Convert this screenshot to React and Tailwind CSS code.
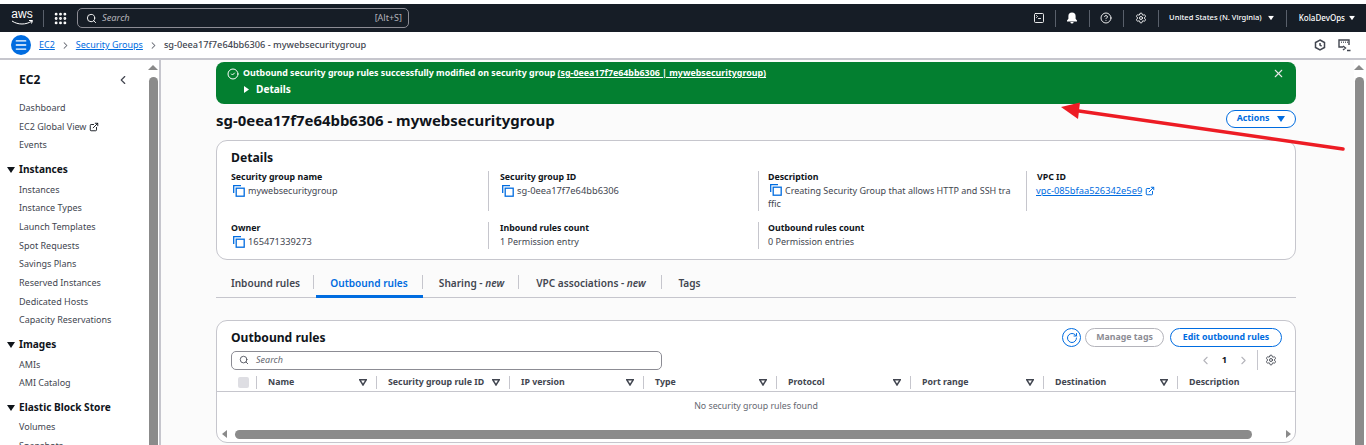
import { Search, Grip, SquareTerminal, CircleHelp, Settings, ChevronRight, ChevronLeft, X, CircleCheck, Menu, RotateCw, ExternalLink } from "lucide-react";

const NAV_SECTIONS = [
  { title: "Instances", items: ["Instances", "Instance Types", "Launch Templates", "Spot Requests", "Savings Plans", "Reserved Instances", "Dedicated Hosts", "Capacity Reservations"] },
  { title: "Images", items: ["AMIs", "AMI Catalog"] },
  { title: "Elastic Block Store", items: ["Volumes", "Snapshots"] },
];

const COLUMNS = [
  { label: "Name", w: "w-[120px]" },
  { label: "Security group rule ID", w: "w-[133px]" },
  { label: "IP version", w: "w-[134px]" },
  { label: "Type", w: "w-[133px]" },
  { label: "Protocol", w: "w-[134px]" },
  { label: "Port range", w: "w-[133px]" },
  { label: "Destination", w: "w-[134px]" },
];

const TABS = [
  { label: "Inbound rules", w: "w-[98px]" },
  { label: "Outbound rules", w: "w-[109px]", active: true },
  { label: "Sharing", tag: true, w: "w-[96px]" },
  { label: "VPC associations", tag: true, w: "w-[143px]" },
  { label: "Tags", w: "w-[54px]", last: true },
];

function CopyIcon() {
  return (
    <svg width="12" height="12" viewBox="0 0 12 12" fill="none" stroke="#006ce0" strokeWidth="1.3" className="shrink-0">
      <path d="M0.7 8V0.7H8" />
      <rect x="3.2" y="3.2" width="8" height="8" />
    </svg>
  );
}

function Caret({ className }) {
  return (
    <svg width="8" height="6" viewBox="0 0 8 6" className={className} fill="currentColor">
      <path d="M0 0h8L4 6z" />
    </svg>
  );
}

function FilterCaret() {
  return (
    <svg width="8" height="7" viewBox="0 0 8 7" fill="none" stroke="#424650" strokeWidth="1.5" className="shrink-0">
      <path d="M0.8 0.8h6.4L4 6z" />
    </svg>
  );
}

function Field({ label, children }) {
  return (
    <div>
      <div className="text-[8.8px] leading-[13px] font-bold text-[#0f141a]">{label}</div>
      <div className="text-[9px] leading-[13px] text-[#424650]">{children}</div>
    </div>
  );
}

function Scrollbar({ className = "" }) {
  return (
    <div className={`w-[10px] shrink-0 flex flex-col items-center ${className}`}>
      <div className="mt-[5px] w-0 h-0 border-x-[5px] border-x-transparent border-b-[5px] border-b-[#8a8a8a]" />
      <div className="mt-[7px] w-[9px] h-[400px] rounded-t-[5px] bg-[#8b8b8b]" />
    </div>
  );
}

export default function App() {
  return (
    <div className="relative w-[1366px] h-[445px] overflow-hidden flex flex-col bg-white font-['Noto_Sans','Open_Sans',sans-serif] text-[#0f141a]">
      <div className="h-[4px] shrink-0 bg-white" />

      {/* Top nav */}
      <header className="h-[28px] shrink-0 bg-[#161d26] flex items-center text-white">
        <div className="w-[32px] ml-[11px] h-full flex flex-col items-center">
          <span className="text-[12px] leading-[12px] mt-[4px] font-['Liberation_Sans',sans-serif] -ml-[10px]">aws</span>
          <svg width="23" height="6" viewBox="0 0 23 6" fill="none" className="-ml-[10px]">
            <path d="M1 1c6 4 14 4 20 0M18 0.5h3.5l-1 3" stroke="#fff" strokeWidth="1" />
          </svg>
        </div>
        <div className="w-px h-[17px] bg-[#59606b]" />
        <Grip size={15} strokeWidth={2.6} className="ml-[9px] shrink-0" />
        <div className="ml-[9px] w-[332px] h-[20px] border border-[#8c8c94] rounded-[5px] flex items-center pl-[8px] pr-[6px] text-[#b4b4bb]">
          <Search size={11} className="text-white" />
          <span className="ml-[5px] text-[9.3px] italic flex-1">Search</span>
          <span className="text-[9px]">[Alt+S]</span>
        </div>
        <div className="ml-auto flex items-center h-full">
          <SquareTerminal size={12} strokeWidth={1.8} className="shrink-0" />
          <div className="w-px h-[17px] bg-[#59606b] ml-[10px]" />
          <svg width="12" height="12" viewBox="0 0 12 12" fill="#fff" className="ml-[10px]">
            <path d="M6 0.5a3.6 3.6 0 0 0-3.6 3.6v2.6L1 8.4v1h10v-1L9.6 6.7V4.1A3.6 3.6 0 0 0 6 .5zM4.4 10a1.6 1.6 0 0 0 3.2 0z" />
          </svg>
          <div className="w-px h-[17px] bg-[#59606b] ml-[11px]" />
          <CircleHelp size={12} strokeWidth={1.8} className="ml-[10px]" />
          <div className="w-px h-[17px] bg-[#59606b] ml-[11px]" />
          <Settings size={12} strokeWidth={1.8} className="ml-[11px]" />
          <div className="w-px h-[17px] bg-[#59606b] ml-[11px]" />
          <span className="ml-[10px] text-[7.55px] font-medium">United States (N. Virginia)</span>
          <Caret className="ml-[5px] scale-75" />
          <div className="w-px h-[17px] bg-[#59606b] ml-[11px]" />
          <span className="ml-[12px] text-[8px] font-medium">KolaDevOps</span>
          <Caret className="ml-[3px] mr-[10px] scale-75" />
        </div>
      </header>

      {/* Breadcrumbs */}
      <div className="h-[28px] shrink-0 border-b-2 border-[#c6c6cd] flex items-center text-[9px]">
        <div className="ml-[11px] w-[20px] h-[20px] rounded-full bg-[#006ce0] flex items-center justify-center text-white">
          <Menu size={14} strokeWidth={2.4} />
        </div>
        <span className="ml-[8px] text-[#006ce0] underline">EC2</span>
        <ChevronRight size={11} strokeWidth={2.2} className="mx-[5px] text-[#656871]" />
        <span className="text-[#006ce0] underline">Security Groups</span>
        <ChevronRight size={11} strokeWidth={2.2} className="mx-[5px] text-[#656871]" />
        <span className="text-[#424650] text-[9.2px] font-medium">sg-0eea17f7e64bb6306 - mywebsecuritygroup</span>
        <div className="ml-auto mr-[15px] flex items-center gap-[12px] text-[#424650]">
          <svg width="12" height="12" viewBox="0 0 12 12" fill="none" stroke="currentColor" strokeWidth="1.5">
            <path d="M6 1l4.5 2.5v5L6 11 1.5 8.5v-5z" />
            <path d="M6 4v2.2l1.6 1" />
          </svg>
          <svg width="13" height="13" viewBox="0 0 13 13" fill="none" stroke="currentColor" strokeWidth="1.4">
            <path d="M5 8H1V1h10v5" />
            <path d="M3 3.2h.8M5 3.2h.8M7 3.2h.8M9 3.2h.8M9 11.5h3.5M5 7l2.5 2L5 11" />
          </svg>
        </div>
      </div>

      <div className="flex-1 min-h-0 flex">
        {/* Sidebar */}
        <aside className="w-[161px] shrink-0 border-r-2 border-[#c6c6cd] flex overflow-hidden">
          <nav className="w-[148px] shrink-0">
            <div className="h-[39px] pl-[19px] pr-[18px] flex items-center justify-between">
              <span className="text-[12px] font-bold">EC2</span>
              <ChevronLeft size={14} strokeWidth={2} className="text-[#424650]" />
            </div>
            <ul className="pl-[19px] text-[9px] text-[#424650]">
              <li className="h-[18.7px] leading-[18.7px]">Dashboard</li>
              <li className="h-[18.7px] leading-[18.7px] flex items-center gap-[3px]">EC2 Global View <ExternalLink size={10} strokeWidth={2.2} className="text-[#0f141a]" /></li>
              <li className="h-[18.7px] leading-[18.7px]">Events</li>
            </ul>
            {NAV_SECTIONS.map((s) => (
              <div key={s.title} className="mt-[4px]">
                <div className="h-[21.5px] pl-[7px] flex items-center text-[10.1px] font-bold">
                  <Caret className="mr-[4px]" />
                  {s.title}
                </div>
                <ul className="pl-[19px] text-[9px] text-[#424650]">
                  {s.items.map((i) => (
                    <li key={i} className="h-[18.7px] leading-[18.7px]">{i}</li>
                  ))}
                </ul>
              </div>
            ))}
          </nav>
          <Scrollbar className="bg-white" />
        </aside>

        {/* Main */}
        <main className="flex-1 min-w-0 bg-[#fbfbfb] pl-[55px] pr-[58px] pt-[2px] overflow-hidden">
          {/* Flash */}
          <div className="h-[42px] rounded-[8px] bg-[#037f30] text-white pl-[11px] pr-[11px] pt-[4px] flex">
            <CircleCheck size={12} className="mt-[2px] shrink-0" />
            <div className="ml-[4px] flex-1">
              <div className="text-[8.85px] leading-[15px] font-bold">
                Outbound security group rules successfully modified on security group <span className="underline">(sg-0eea17f7e64bb6306 | mywebsecuritygroup)</span>
              </div>
              <div className="mt-[1px] pl-[1px] flex items-center text-[10.1px] leading-[15px] font-bold">
                <svg width="5" height="7" viewBox="0 0 5 7" fill="#fff" className="mr-[7px]"><path d="M0 0l5 3.5L0 7z" /></svg>
                Details
              </div>
            </div>
            <X size={13} className="text-[#e8e8e8] shrink-0 mt-[1px]" />
          </div>

          {/* Title */}
          <div className="h-[36px] flex items-end justify-between">
            <h1 className="text-[14.95px] leading-[24px] font-bold mb-[8px]">sg-0eea17f7e64bb6306 - mywebsecuritygroup</h1>
            <button className="h-[18px] w-[70px] mb-[12px] rounded-full border border-[#006ce0] bg-white text-[#006ce0] text-[8.8px] font-bold flex items-center justify-center gap-[8px]">
              Actions <Caret />
            </button>
          </div>

          {/* Details card */}
          <section className="h-[120px] rounded-[11px] border border-[#c6c6cd] bg-white pl-[14px] pt-[8px]">
            <h2 className="text-[12.2px] leading-[18px] font-bold">Details</h2>
            <div className="mt-[4px] grid grid-cols-[258px_269px_268px_1fr]">
              <Field label="Security group name">
                <span className="flex items-center gap-[3px] pl-[2px]"><CopyIcon />mywebsecuritygroup</span>
              </Field>
              <div className="pl-[11px] border-l border-[#c6c6cd] h-[40px] -ml-px">
                <Field label="Security group ID">
                  <span className="flex items-center gap-[3px] pl-[2px] text-[9.3px]"><CopyIcon />sg-0eea17f7e64bb6306</span>
                </Field>
              </div>
              <div className="pl-[9px] border-l border-[#c6c6cd] h-[40px]">
                <Field label="Description">
                  <span className="block leading-[13px] w-[243px] break-all"><span className="inline-block align-[-2px] mr-[3px] ml-[2px]"><CopyIcon /></span>Creating Security Group that allows HTTP and SSH traffic</span>
                </Field>
              </div>
              <div className="pl-[10px] border-l border-[#c6c6cd] h-[40px]">
                <Field label="VPC ID">
                  <span className="flex items-center gap-[3px] -ml-[1px] text-[#006ce0] underline text-[9.3px]">vpc-085bfaa526342e5e9 <ExternalLink size={10} strokeWidth={2.4} /></span>
                </Field>
              </div>
            </div>
            <div className="mt-[11px] grid grid-cols-[258px_269px_1fr]">
              <Field label="Owner">
                <span className="flex items-center gap-[3px] pl-[2px] text-[9.3px]"><CopyIcon />165471339273</span>
              </Field>
              <div className="pl-[11px] border-l border-[#c6c6cd] h-[27px] -ml-px">
                <Field label="Inbound rules count">1 Permission entry</Field>
              </div>
              <div className="pl-[9px] border-l border-[#c6c6cd] h-[27px]">
                <Field label="Outbound rules count">0 Permission entries</Field>
              </div>
            </div>
          </section>

          {/* Tabs */}
          <div className="mt-[10px] h-[28px] border-b border-[#c6c6cd] flex items-center text-[10.1px] font-semibold text-[#424650]">
            {TABS.map((t) => (
              <div key={t.label} className={`relative h-full shrink-0 pl-[1px] flex items-center justify-center ${t.w} ${t.active ? "text-[#006ce0]" : ""}`}>
                <span>{t.label}{t.tag && <> - <i>new</i></>}</span>
                {!t.last && <span className="absolute right-0 top-[5px] h-[14px] w-px bg-[#c6c6cd]" />}
                {t.active && <span className="absolute left-[2px] right-0 bottom-[-1px] h-[3px] bg-[#006ce0]" />}
              </div>
            ))}
          </div>

          {/* Rules card */}
          <section className="mt-[22px] h-[123px] rounded-[11px] border border-[#c6c6cd] bg-white overflow-hidden">
            <div className="flex pl-[14px] pr-[13px] pt-[7px] items-start">
              <h2 className="text-[12.1px] leading-[18px] font-bold mt-[1px]">Outbound rules</h2>
              <div className="ml-auto flex items-center">
                <div className="w-[19px] h-[19px] rounded-full border border-[#006ce0] flex items-center justify-center text-[#006ce0]">
                  <RotateCw size={12} />
                </div>
                <div className="ml-[4px] w-[79px] h-[19px] rounded-full border border-[#b4b4bb] text-[#8c8c94] text-[8.8px] font-bold flex items-center justify-center">Manage tags</div>
                <div className="ml-[6px] w-[112px] h-[19px] rounded-full border border-[#006ce0] text-[#006ce0] text-[8.8px] font-bold flex items-center justify-center">Edit outbound rules</div>
              </div>
            </div>
            <div className="flex pl-[14px] pr-[18px] items-center h-[20px] mt-[3px]">
              <div className="w-[431px] h-[19px] rounded-[5px] border border-[#8c8c94] flex items-center pl-[7px]">
                <Search size={10} className="text-[#424650]" />
                <span className="ml-[7px] text-[9px] italic text-[#656871]">Search</span>
              </div>
              <div className="ml-auto flex items-center text-[#b4b4bb]">
                <ChevronLeft size={13} />
                <span className="mx-[10px] text-[9.3px] font-bold text-[#0f141a]">1</span>
                <ChevronRight size={13} />
                <div className="w-px h-[20px] bg-[#c6c6cd] mx-[7px]" />
                <Settings size={12} strokeWidth={1.8} className="text-[#424650]" />
              </div>
            </div>
            {/* Table header */}
            <div className="mt-[4px] pl-[14px] h-[18px] border-b border-[#c6c6cd] flex items-center text-[8.8px] font-bold text-[#424650] overflow-hidden">
              <div className="w-[25px] shrink-0 pl-[7px] flex items-center h-full">
                <div className="w-[11px] h-[11px] rounded-[2px] bg-[#dedee3]" />
              </div>
              {COLUMNS.map((c) => (
                <div key={c.label} className={`${c.w} shrink-0 flex items-center h-[13px] border-l border-[#c6c6cd] pl-[11px] pr-[9px]`}>
                  <span className="flex-1 whitespace-nowrap">{c.label}</span>
                  <FilterCaret />
                </div>
              ))}
              <div className="shrink-0 border-l border-[#c6c6cd] h-[13px] flex items-center pl-[11px]">Description</div>
            </div>
            <div className="h-[30px] flex items-center justify-center text-[8.8px] text-[#656871]">No security group rules found</div>
            {/* Horizontal scrollbar */}
            <div className="mt-[6px] flex items-center h-[12px] pl-[5px] pr-[4px]">
              <div className="w-0 h-0 border-y-[4px] border-y-transparent border-r-[5px] border-r-[#8a8a8a]" />
              <div className="ml-[8px] w-[1017px] h-[9px] rounded-full bg-[#8b8b8b]" />
              <div className="ml-auto w-0 h-0 border-y-[4px] border-y-transparent border-l-[5px] border-l-[#8a8a8a]" />
            </div>
          </section>
        </main>

        <Scrollbar className="mr-[2px] bg-white" />
      </div>

      {/* Annotation arrow */}
      <svg className="absolute inset-0 pointer-events-none" width="1366" height="445" fill="none">
        <path d="M1343 149L1072 110" stroke="#ed1c24" strokeWidth="3.5" strokeLinecap="round" />
        <path d="M1061 107L1080 102.5L1078 119z" fill="#ed1c24" />
      </svg>
    </div>
  );
}
